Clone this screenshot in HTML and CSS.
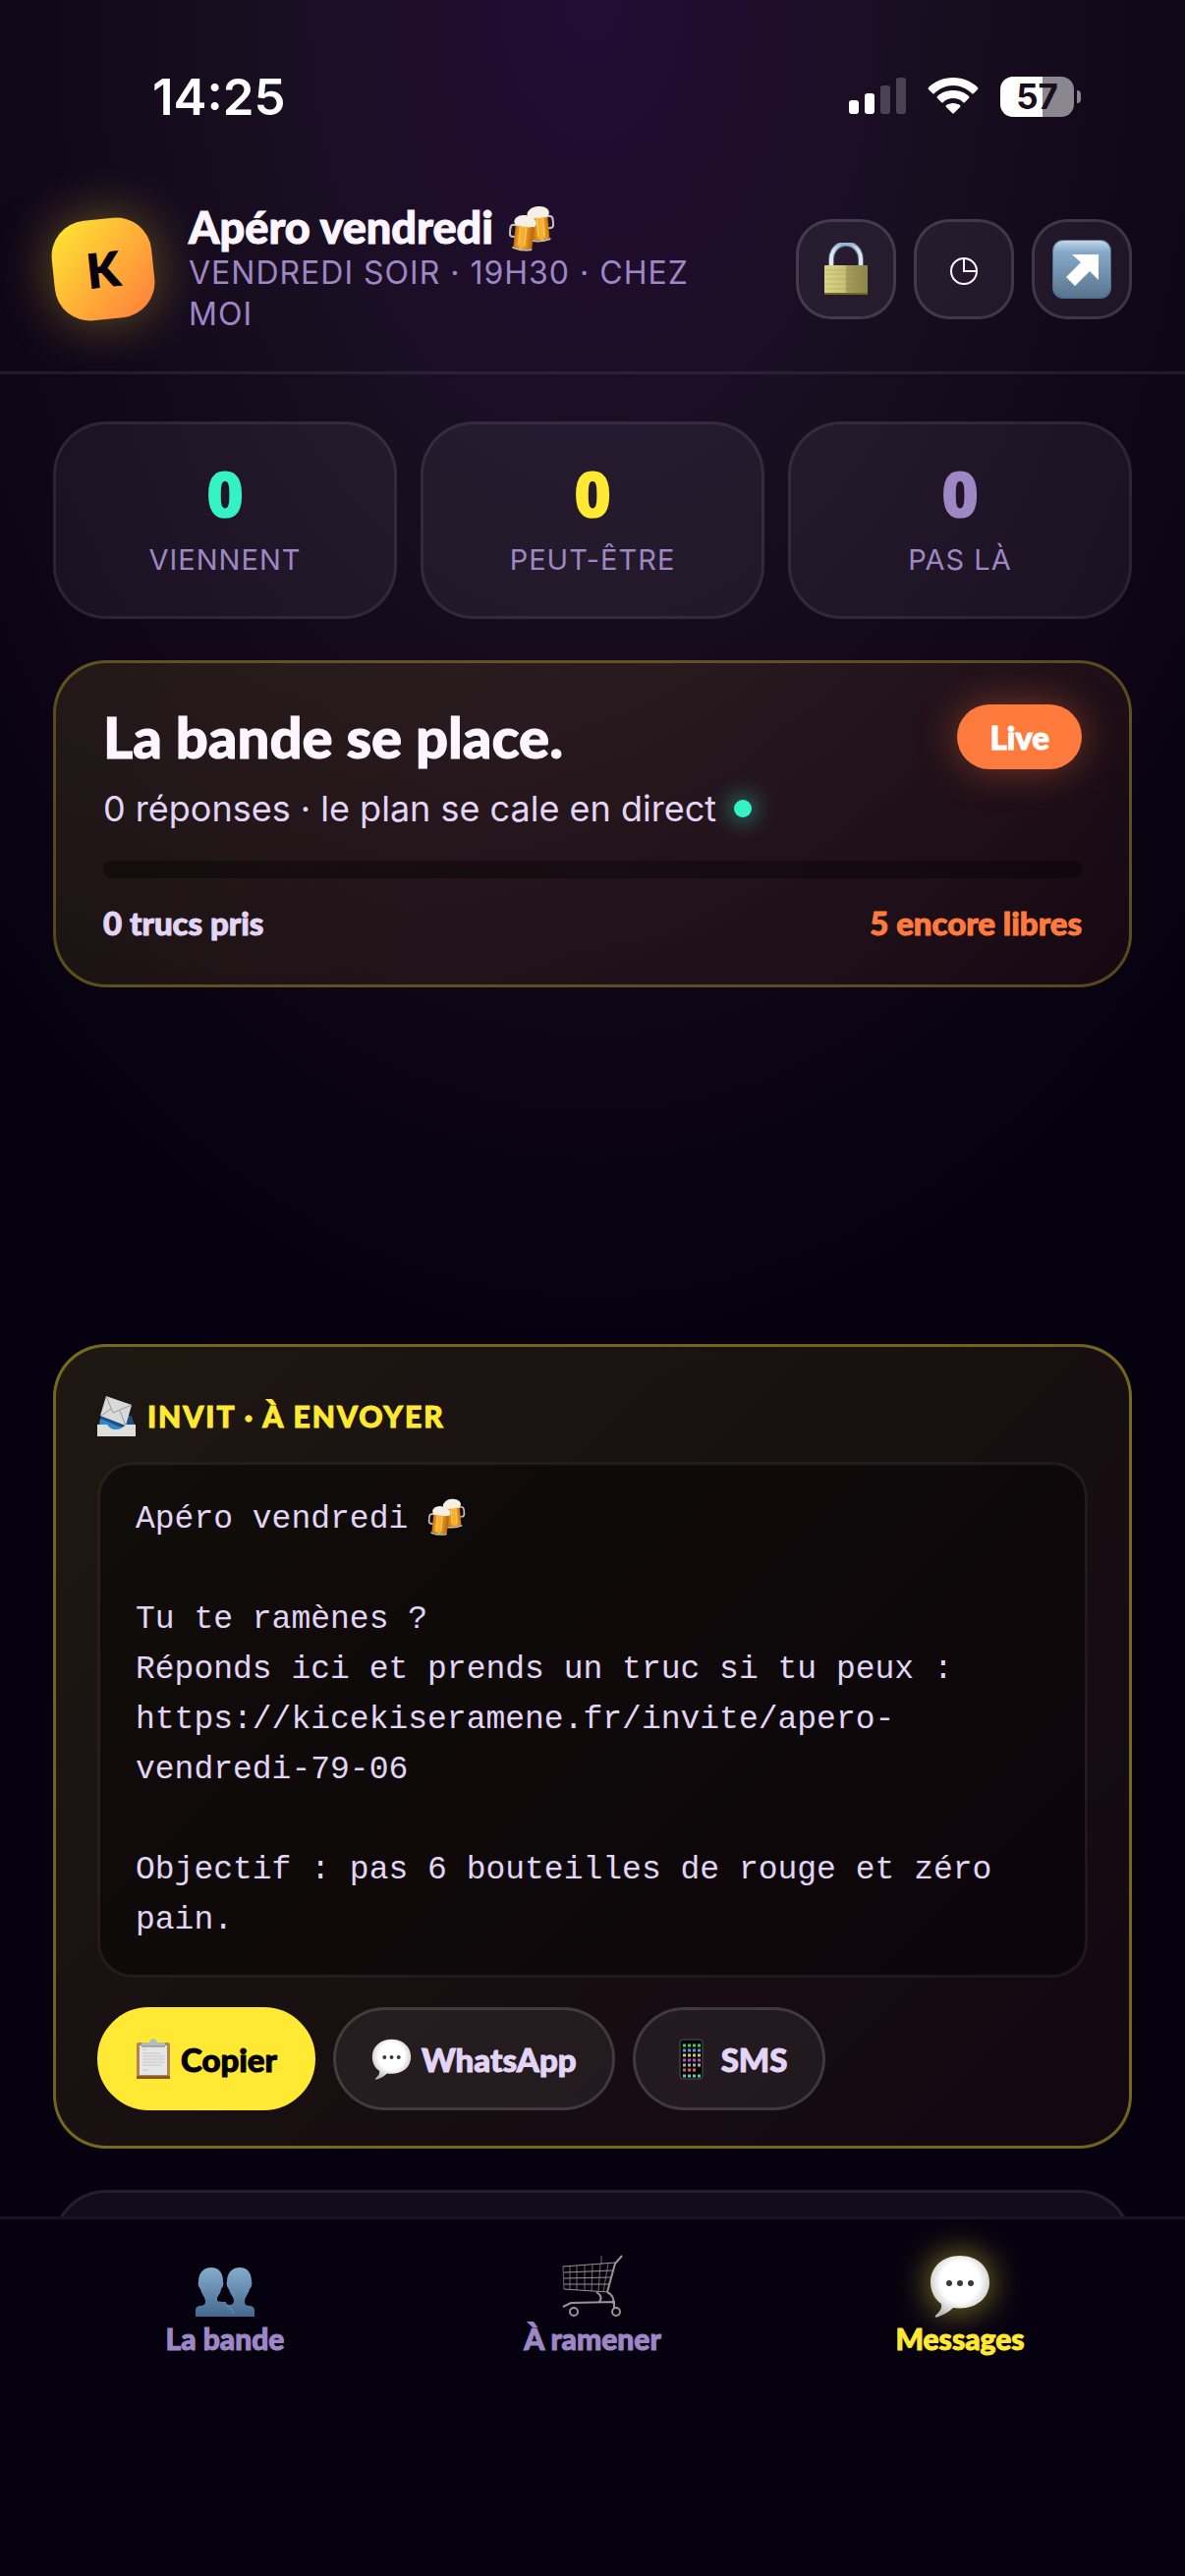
FILE: index.html
```html
<!DOCTYPE html>
<html lang="fr">
<head>
  <meta charset="UTF-8">
  <meta name="viewport" content="width=device-width, initial-scale=1">
  <title>Apéro vendredi 🍻</title>
  <link rel="stylesheet" href="styles.css">
</head>
<body>
  <!-- shared icons -->
  <svg class="defs" aria-hidden="true">
    <defs>
      <linearGradient id="beer" x1="0" x2="1"><stop offset="0" stop-color="#c9740c"/><stop offset=".4" stop-color="#ffb52c"/><stop offset="1" stop-color="#b96508"/></linearGradient>
      <radialGradient id="bubbleFill" cx=".5" cy=".42" r=".6"><stop offset=".55" stop-color="#fff"/><stop offset="1" stop-color="#b9b9b9"/></radialGradient>
      <linearGradient id="blue" x1="0" y1="0" x2="0" y2="1"><stop offset="0" stop-color="#85abcc"/><stop offset="1" stop-color="#44688f"/></linearGradient>
      <linearGradient id="brass" x1="0" x2="1"><stop offset="0" stop-color="#dbd688"/><stop offset=".48" stop-color="#c7c175"/><stop offset=".52" stop-color="#a49d5c"/><stop offset="1" stop-color="#8d8549"/></linearGradient>
      <linearGradient id="steel" x1="0" x2="1"><stop offset="0" stop-color="#e3edf8"/><stop offset=".35" stop-color="#8fb3dd"/><stop offset=".7" stop-color="#9fb9d8"/><stop offset="1" stop-color="#dfe8f2"/></linearGradient>
      <linearGradient id="key" x1="0" y1="0" x2="0" y2="1"><stop offset="0" stop-color="#c3d7e6"/><stop offset=".2" stop-color="#86a9c9"/><stop offset="1" stop-color="#5a7690"/></linearGradient>
      <g id="mug">
        <path d="M7 11H4q-3 0-3 4v4q0 4 3 4h4" fill="none" stroke="#c8c3ba" stroke-width="2"/>
        <path d="M6 8h19v25q-9 3-19 0z" fill="url(#beer)"/>
        <path d="M11 11v20M17 11v20" stroke="#ffd873" stroke-width="2" opacity=".6"/>
        <path d="M5 33q10 3 20 0v2q-10 3-20 0z" fill="#c9b99b"/>
        <path d="M5 10q-2-4 1-7q3-3 9-3t9 3q4 3 2 7q-2 2-4 1q-2 2-5 0q-3 2-6 0q-4 2-6-1z" fill="#f5efe5"/>
      </g>
    </defs>
    <symbol id="i-beers" viewBox="0 0 48 48">
      <g transform="translate(47 1) scale(-1 1) rotate(5 15 18)"><use href="#mug"/></g>
      <g transform="translate(1 10) rotate(6 15 18)"><use href="#mug"/></g>
    </symbol>
    <symbol id="i-bubble" viewBox="0 0 62 64">
      <path d="M31 1C14 1 1 12 1 28c0 10 5 18 11 22 1 5-2 8-6 12-1 2 1 2 3 1 6-2 11-5 15-9 22 3 37-9 37-26C61 12 48 1 31 1z" fill="url(#bubbleFill)"/>
      <circle cx="20" cy="29" r="3" fill="#3a3a3a"/><circle cx="31" cy="29" r="3" fill="#3a3a3a"/><circle cx="42" cy="29" r="3" fill="#3a3a3a"/>
    </symbol>
  </svg>

  <div class="app">
    <div class="status-bar">
      <span class="time">14:25</span>
      <div class="status-icons">
        <svg width="58" height="38" viewBox="0 0 58 38" fill="#fff">
          <rect y="23" width="10" height="14" rx="3"/><rect x="16" y="16" width="10" height="21" rx="3"/>
          <rect x="32" y="8" width="10" height="29" rx="3" opacity=".22"/><rect x="48" width="10" height="37" rx="3" opacity=".22"/>
        </svg>
        <svg width="52" height="38" viewBox="0 0 52 38" fill="#fff">
          <path d="M26 0C16 0 7 4 1 10q-1 1 0 2l4 4q1 1 2 0C12 11 19 8 26 8s14 3 19 8q1 1 2 0l4-4q1-1 0-2C45 4 36 0 26 0z"/>
          <path d="M26 13c-6 0-12 2-16 6q-1 1 0 2l4 4q1 1 2 0c3-3 6-4 10-4s7 1 10 4q1 1 2 0l4-4q1-1 0-2c-4-4-10-6-16-6z"/>
          <path d="M26 26c-3 0-5 1-7 2q-1 1 0 2l6 6q1 1 2 0l6-6q1-1 0-2c-2-1-4-2-7-2z"/>
        </svg>
        <div class="battery"><span class="battery-level">57</span></div>
      </div>
    </div>

    <header class="header">
      <div class="logo"><span>K</span></div>
      <div class="event">
        <h1>Apéro vendredi <svg class="beers"><use href="#i-beers"/></svg></h1>
        <p>Vendredi soir · 19h30 · chez moi</p>
      </div>
      <div class="actions">
        <button class="icon-btn" aria-label="Verrouiller">
          <svg width="46" height="54" viewBox="0 0 46 54">
            <path d="M8 27V17a14 15 0 0 1 30 0v10" fill="none" stroke="#5b6675" stroke-width="6"/>
            <path d="M8 27V17a14 15 0 0 1 30 0v10" fill="none" stroke="url(#steel)" stroke-width="4"/>
            <rect x="1" y="23" width="44" height="30" rx="1" fill="url(#brass)"/>
            <path d="M1 28h44M1 32h44M1 37h44M1 42h44M1 47h44" stroke="#8b843f" stroke-width="1" opacity=".3"/>
            <path d="M1 51h44v2H1z" fill="#6f6527"/>
          </svg>
        </button>
        <button class="icon-btn" aria-label="Historique">
          <svg width="30" height="34" viewBox="0 0 30 34" fill="none" stroke="#fdf5ff" stroke-width="2">
            <circle cx="15" cy="19" r="13"/><path d="M15 6v13h13"/>
          </svg>
        </button>
        <button class="icon-btn" aria-label="Partager">
          <svg width="60" height="60" viewBox="0 0 60 60">
            <rect width="60" height="60" rx="11" fill="#4e6f8e"/>
            <rect x="1" y="1" width="58" height="57" rx="10" fill="url(#key)"/>
            <path d="M20 15h27v26l-9-9-15 15-9-9 15-15z" fill="#fff"/>
          </svg>
        </button>
      </div>
    </header>

    <main class="content">
      <section class="stats">
        <div class="stat"><strong class="mint">0</strong><span>Viennent</span></div>
        <div class="stat"><strong class="yellow">0</strong><span>Peut-être</span></div>
        <div class="stat"><strong class="muted">0</strong><span>Pas là</span></div>
      </section>

      <section class="plan">
        <div class="plan-top">
          <h2>La bande se place.</h2>
          <span class="live">Live</span>
        </div>
        <p class="plan-sub">0 réponses · le plan se cale en direct <i class="dot"></i></p>
        <div class="bar"></div>
        <div class="plan-foot"><span>0 trucs pris</span><span class="orange">5 encore libres</span></div>
      </section>

      <section class="invite">
        <h3>
          <svg width="39" height="42" viewBox="0 0 39 42">
            <path d="M4 20h31l3 10H1z" fill="#1d4f80"/>
            <path d="M9 0l26 9-6 21L3 20z" fill="#d9d9d9"/>
            <path d="M9 0l7 17 19-8M4 20l10-7M29 30l-6-15" fill="none" stroke="#9a9a9a" stroke-width="1"/>
            <path d="M3 23q9 3 16 7 8 2 13-1l5 2v4H2z" fill="#2f86cf"/>
            <path d="M0 29h10q3 5 9 5t10-5h10v12H0z" fill="#dededa"/>
          </svg>
          Invit · à envoyer
        </h3>
        <div class="message">Apéro vendredi <svg class="beers"><use href="#i-beers"/></svg>

Tu te ramènes ?
Réponds ici et prends un truc si tu peux :
https://kicekiseramene.fr/invite/apero-vendredi-79-06

Objectif : pas 6 bouteilles de rouge et zéro pain.</div>
        <div class="share">
          <button class="btn btn-main">
            <svg width="36" height="42" viewBox="0 0 36 42">
              <rect x="1" y="4" width="34" height="37" rx="2" fill="#b58350"/>
              <path d="M1 38h34v3H1z" fill="#8a5727"/>
              <rect x="4" y="7" width="28" height="30" fill="#e6e6e6"/>
              <path d="M7 11h4M7 15h18M7 18h22M7 21h22M7 24h22M7 27h20M7 32h6" stroke="#c6c6c6" stroke-width="1"/>
              <path d="M6 8V5q0-1 2-1h6q1-4 4-4t4 4h6q2 0 2 1v3z" fill="#b4bcc0"/>
              <path d="M6 8h24" stroke="#7c8487" stroke-width="1"/>
            </svg>
            Copier
          </button>
          <button class="btn">
            <svg width="41" height="42"><use href="#i-bubble"/></svg>
            WhatsApp
          </button>
          <button class="btn">
            <svg width="41" height="42" viewBox="0 0 41 42">
              <rect x="9" y="1" width="23" height="40" rx="3" fill="#050505" stroke="#4d5356" stroke-width="1"/>
              <g stroke-width="3" stroke-dasharray="3 2">
                <path d="M12 7h18" stroke="#54c45e"/><path d="M12 12h18" stroke="#4f9fd6"/>
                <path d="M12 17h18" stroke="#d8c25a"/><path d="M12 22h18" stroke="#c24bc9"/>
                <path d="M12 27h18" stroke="#a8a8a8"/><path d="M12 32h13" stroke="#d9635c"/>
                <path d="M12 38h18" stroke="#55d0a0"/>
              </g>
            </svg>
            SMS
          </button>
        </div>
      </section>

      <section class="next-card"></section>
    </main>

    <nav class="tabs">
      <a class="tab" href="#bande">
        <svg width="62" height="64" viewBox="0 0 62 64" fill="url(#blue)">
          <path d="M17 13C9 13 4 19 4 27c-1 3 0 6 2 8 1 5 5 8 5 13 0 3-3 4-6 4-3 1-4 2-4 5v6h32l8-11c-6-1-9-1-9-4-9 0-9-1-9-3 0-3 4-6 4-10 2-2 3-5 2-8 0-8-4-14-12-14z"/>
          <path d="M46 13c-8 0-13 6-13 14-1 3 0 6 2 8 1 5 5 8 5 12 0 3-2 4-8 5l-3 11h32v-6c0-3-1-4-4-5-4 0-6-1-6-4 0-5 4-8 5-13 2-2 3-5 2-8 0-8-4-14-12-14z"/>
          <path d="M32 52q7 2 8 8" fill="none" stroke="#6d93b6" stroke-width="1"/>
        </svg>
        La bande
      </a>
      <a class="tab" href="#ramener">
        <svg width="62" height="64" viewBox="0 0 62 64" fill="none" stroke="#9b9496">
          <path d="M61 1l-7 8-8 29" stroke-width="2"/>
          <path d="M1 12l53-4M2 18l50-2M2 24l49-1M2 30l47 0M2 35l45 3" stroke-width="1"/>
          <path d="M1 12l1 23M8 12v24M15 11v25M23 11v26M31 10l-1 27M39 9l-2 29M47 9l-5 29M40 1v8" stroke-width="1" opacity=".7"/>
          <path d="M35 38q8 5 2 11M46 38q8 4 6 12M1 53l8-4 44-1v6" stroke-width="2"/>
          <circle cx="12" cy="58" r="4" stroke-width="2"/><circle cx="55" cy="58" r="4" stroke-width="2"/>
        </svg>
        À ramener
      </a>
      <a class="tab active" href="#messages">
        <svg width="62" height="64"><use href="#i-bubble"/></svg>
        Messages
      </a>
    </nav>
  </div>
</body>
</html>
```
FILE: styles.css
```css
:root {
  --bg: #05010f;
  --text: #fdf5ff;
  --soft: #e3d5f5;
  --muted: #9d87c4;
  --yellow: #ffe932;
  --orange: #ff7b3d;
  --mint: #35f2c5;
  --line: rgba(255, 255, 255, 0.08);
  --round: Lato, "Open Sans", sans-serif;
}

* {
  box-sizing: border-box;
}

body {
  margin: 0;
  background: var(--bg);
  color: var(--text);
  font-family: Inter, "Noto Sans", sans-serif;
}

h1, h2, h3, p {
  margin: 0;
}

h1, h2, h3, .logo, .live, .btn, .tab, .plan-foot {
  -webkit-text-stroke: 1px currentColor;
}

svg {
  flex-shrink: 0;
}

.defs {
  position: absolute;
  width: 0;
  height: 0;
}

.app {
  display: flex;
  flex-direction: column;
  height: 100vh;
  overflow: hidden;
  background: radial-gradient(ellipse 900px 1400px at 50% 0, #220d35 0%, #190e20 40%, #120719 65%, var(--bg) 100%);
}

/* status bar */
.status-bar {
  display: flex;
  justify-content: space-between;
  align-items: center;
  height: 196px;
  padding: 0 113px 0 155px;
}

.time {
  font-size: 51px;
  font-weight: 600;
  color: #fff;
}

.status-icons {
  display: flex;
  align-items: center;
  gap: 22px;
}

.battery {
  position: relative;
  width: 75px;
  height: 41px;
  border-radius: 13px;
  background: linear-gradient(90deg, #fff 57%, #8b878e 57%);
  text-align: center;
}

.battery::after {
  content: "";
  position: absolute;
  right: -7px;
  top: 14px;
  width: 4px;
  height: 13px;
  border-radius: 0 4px 4px 0;
  background: #8b878e;
}

.battery-level {
  font-size: 35px;
  line-height: 41px;
  font-weight: 700;
  color: #190e20;
}

/* header */
.header {
  display: flex;
  align-items: center;
  gap: 36px;
  padding: 0 54px 27px;
  height: 185px;
  border-bottom: 3px solid var(--line);
}

.logo {
  display: flex;
  align-items: center;
  justify-content: center;
  flex-shrink: 0;
  width: 102px;
  height: 102px;
  border-radius: 36px;
  background: linear-gradient(135deg, var(--yellow), var(--orange));
  box-shadow: 0 0 54px rgba(255, 233, 50, 0.35);
  transform: rotate(-6deg);
  color: #05010f;
  font: 900 48px/1 var(--round);
}

.event {
  flex: 1;
}

.event h1 {
  font: 900 45px/51px var(--round);
  white-space: nowrap;
}

.event p {
  font-size: 32px;
  line-height: 42px;
  letter-spacing: 1px;
  text-transform: uppercase;
  color: var(--muted);
}

.beers {
  width: 48px;
  height: 48px;
  margin-left: 4px;
  vertical-align: -9px;
}

.actions {
  display: flex;
  gap: 18px;
}

.icon-btn {
  display: flex;
  align-items: center;
  justify-content: center;
  width: 102px;
  height: 102px;
  padding: 0;
  border: 3px solid rgba(255, 255, 255, 0.14);
  border-radius: 36px;
  background: rgba(255, 255, 255, 0.06);
}

/* content */
.content {
  flex: 1;
  min-height: 0;
  overflow: hidden;
  padding: 48px 54px 0;
}

.stats {
  display: grid;
  grid-template-columns: repeat(3, 1fr);
  gap: 24px;
}

.stat {
  display: flex;
  flex-direction: column;
  align-items: center;
  height: 201px;
  padding-top: 36px;
  border: 3px solid var(--line);
  border-radius: 54px;
  background: rgba(255, 255, 255, 0.05);
}

.stat strong {
  font: 800 66px/66px "Open Sans", sans-serif;
}

.stat span {
  margin-top: 15px;
  font-size: 29px;
  line-height: 42px;
  letter-spacing: 1px;
  text-transform: uppercase;
  color: var(--muted);
}

.mint { color: var(--mint); }
.yellow { color: var(--yellow); }
.muted { color: var(--muted); }
.orange { color: var(--orange); }

.plan {
  height: 333px;
  margin-top: 42px;
  padding: 42px 48px;
  border: 3px solid rgba(255, 233, 50, 0.28);
  border-radius: 54px;
  background: linear-gradient(135deg, rgba(255, 233, 50, 0.09), rgba(255, 123, 61, 0.06));
}

.plan-top {
  display: flex;
  justify-content: space-between;
  align-items: center;
}

.plan-top h2 {
  font: 900 58px/66px var(--round);
}

.live {
  padding: 0 33px;
  border-radius: 33px;
  background: var(--orange);
  box-shadow: 0 0 42px rgba(255, 123, 61, 0.4);
  color: #fff;
  font: 900 33px/66px var(--round);
}

.plan-sub {
  margin-top: 12px;
  font-size: 36px;
  line-height: 57px;
  color: var(--soft);
}

.dot {
  display: inline-block;
  width: 18px;
  height: 18px;
  margin-left: 8px;
  border-radius: 50%;
  background: var(--mint);
  box-shadow: 0 0 24px var(--mint);
  vertical-align: 4px;
}

.bar {
  height: 18px;
  margin-top: 24px;
  border-radius: 9px;
  background: rgba(0, 0, 0, 0.35);
}

.plan-foot {
  display: flex;
  justify-content: space-between;
  margin-top: 24px;
  font: 900 33px/42px var(--round);
  color: var(--soft);
}

.plan-foot .orange {
  color: var(--orange);
}

/* invitation */
.invite {
  margin-top: 363px;
  padding: 42px 42px 36px;
  border: 3px solid rgba(255, 233, 50, 0.4);
  border-radius: 54px;
  background: linear-gradient(135deg, rgba(255, 233, 50, 0.1), rgba(255, 123, 61, 0.06));
}

.invite h3 {
  display: flex;
  align-items: center;
  gap: 12px;
  margin-bottom: 18px;
  font: 900 30px/57px var(--round);
  letter-spacing: 2px;
  text-transform: uppercase;
  color: var(--yellow);
}

.message {
  padding: 30px 36px;
  border: 3px solid var(--line);
  border-radius: 36px;
  background: rgba(0, 0, 0, 0.4);
  color: var(--soft);
  font: 33px/51px "Liberation Mono", monospace;
  white-space: pre-wrap;
}

.message .beers {
  width: 39px;
  height: 39px;
  margin-left: 0;
}

.share {
  display: flex;
  gap: 18px;
  margin-top: 30px;
}

.btn {
  display: flex;
  align-items: center;
  gap: 10px;
  height: 105px;
  padding: 0 36px;
  border: 3px solid rgba(255, 255, 255, 0.14);
  border-radius: 53px;
  background: rgba(255, 255, 255, 0.06);
  color: var(--soft);
  font: 900 33px/42px var(--round);
}

.btn-main {
  border-color: var(--yellow);
  background: var(--yellow);
  color: #05010f;
}

.next-card {
  height: 300px;
  margin-top: 42px;
  border: 3px solid var(--line);
  border-radius: 54px;
  background: rgba(255, 255, 255, 0.05);
}

/* bottom tabs */
.tabs {
  display: grid;
  grid-template-columns: repeat(3, 1fr);
  height: 366px;
  padding: 36px 42px 0;
  border-top: 3px solid var(--line);
  background: var(--bg);
}

.tab {
  display: flex;
  flex-direction: column;
  align-items: center;
  gap: 3px;
  color: var(--muted);
  font: 900 30px/36px var(--round);
  text-decoration: none;
}

.tab.active {
  color: var(--yellow);
}

.tab.active svg {
  filter: drop-shadow(0 0 18px rgba(255, 233, 50, 0.6));
}
```
